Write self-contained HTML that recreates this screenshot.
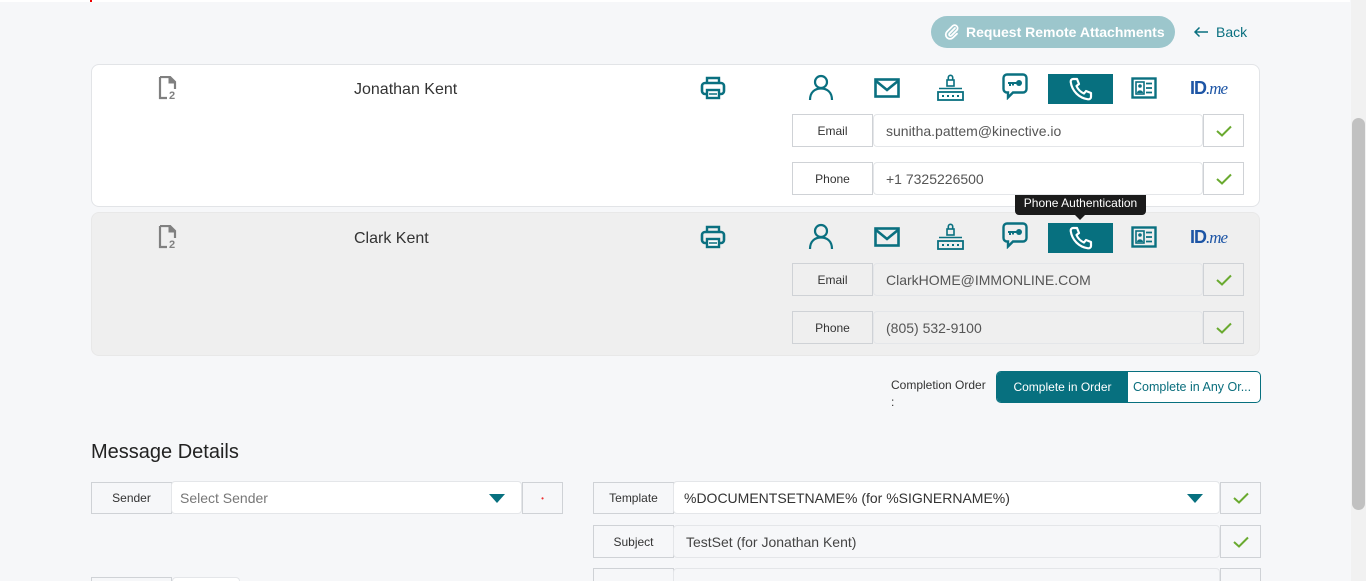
<!DOCTYPE html>
<html style="width:1366px;height:581px;overflow:hidden"><head><meta charset="utf-8"><style>
*{box-sizing:border-box;margin:0;padding:0}
body{width:1366px;height:581px;overflow:hidden;background:#f6f7f9;font-family:"Liberation Sans",sans-serif;position:relative;color:#333}
.a{position:absolute}
.card{position:absolute;left:91px;width:1169px;border:1px solid #e2e4e7;border-radius:8px}
.lbl{position:absolute;border:1px solid #cfd2d6;background:#f6f7f9;font-size:12px;color:#333;display:flex;align-items:center;justify-content:center}
.inp{position:absolute;border:1px solid #e4e6e9;border-radius:4px;font-size:14px;color:#555;display:flex;align-items:center;padding-left:12px}
.chk{position:absolute;border:1px solid #cfd2d6;display:flex;align-items:center;justify-content:center}
.name{position:absolute;font-size:16px;color:#333}
svg.ic{position:absolute}
</style></head><body>
<div class="a" style="left:0;top:0;width:1350px;height:2px;background:#fff"></div>
<div class="a" style="left:90px;top:0;width:2px;height:2px;background:#e00"></div>
<div class="a" style="left:1351px;top:0;width:15px;height:581px;background:#f1f1f1"></div>
<div class="a" style="left:1352px;top:118px;width:13px;height:392px;background:#c1c1c1;border-radius:7px"></div>

<div class="a" style="left:931px;top:16px;width:244px;height:32px;border-radius:16px;background:#9cc6cc;color:#fff;font-size:14px;font-weight:bold;display:flex;align-items:center;padding-left:35px">Request Remote Attachments</div>
<svg class="ic" style="left:944px;top:24px" width="16" height="16" viewBox="0 0 16 16"><path d="M11 4 L5.5 9.5 a1.4 1.4 0 0 0 2 2 L13 6 a3 3 0 0 0 -4.2 -4.2 L3 7.6 a4.2 4.2 0 0 0 6 6 L13 9.7" fill="none" stroke="#fff" stroke-width="1.8" stroke-linecap="round"/></svg>
<svg class="ic" style="left:1193px;top:26px" width="16" height="12" viewBox="0 0 16 12"><path d="M15 6 H2 M6.5 1.5 L2 6 L6.5 10.5" fill="none" stroke="#0a7080" stroke-width="1.5"/></svg>
<div class="a" style="left:1216px;top:24px;font-size:14px;color:#0a7080">Back</div>

<div class="card" style="top:64px;height:143px;background:#fff"></div>
<div class="card" style="top:212px;height:144px;background:#efefef;border-color:#e8e8e8"></div>

<div class="a" style="left:1015px;top:191px;width:131px;height:24px;background:#1b1b1b;border-radius:4px;color:#fff;font-size:12px;display:flex;align-items:center;justify-content:center">Phone Authentication</div>
<div class="a" style="left:1075px;top:215px;width:0;height:0;border-left:5px solid transparent;border-right:5px solid transparent;border-top:5px solid #1b1b1b"></div>

<div class="a" style="left:891px;top:377px;font-size:12px;color:#333;line-height:17px">Completion Order<br>:</div>
<div class="a" style="left:996px;top:371px;width:265px;height:32px;border:1px solid #07707f;border-radius:5px;background:#fff;overflow:hidden">
<div class="a" style="left:0;top:0;width:131px;height:30px;background:#07707f;color:#fff;font-size:12px;display:flex;align-items:center;justify-content:center">Complete in Order</div>
<div class="a" style="left:136px;top:8px;font-size:12.5px;color:#0a6e7d">Complete in Any Or...</div>
</div>

<div class="a" style="left:91px;top:441px;font-size:20px;color:#222">Message Details</div>

<div class="lbl" style="left:91px;top:482px;width:81px;height:32px">Sender</div>
<div class="inp" style="left:171px;top:481px;width:351px;height:33px;background:#fff;color:#777;padding-left:8px">Select Sender</div>
<div class="a" style="left:489px;top:494px;border-left:8px solid transparent;border-right:8px solid transparent;border-top:9px solid #07707f"></div>
<div class="lbl" style="left:522px;top:482px;width:41px;height:32px;background:#f6f7f9"><span style="color:#e33;font-size:8px">•</span></div>

<div class="lbl" style="left:593px;top:482px;width:81px;height:32px">Template</div>
<div class="inp" style="left:673px;top:481px;width:547px;height:33px;background:#fff;color:#333;padding-left:10px">%DOCUMENTSETNAME% (for %SIGNERNAME%)</div>
<div class="a" style="left:1187px;top:494px;border-left:8px solid transparent;border-right:8px solid transparent;border-top:9px solid #07707f"></div>
<div class="chk" style="left:1220px;top:482px;width:41px;height:32px"><svg width="16" height="12"><path d="M1 6 L6 10.5 L15 1.5" fill="none" stroke="#6aaa30" stroke-width="2"/></svg></div>

<div class="lbl" style="left:593px;top:525px;width:81px;height:33px">Subject</div>
<div class="inp" style="left:673px;top:525px;width:547px;height:33px;background:#f6f7f9;color:#444">TestSet (for Jonathan Kent)</div>
<div class="chk" style="left:1220px;top:525px;width:41px;height:33px"><svg width="16" height="12"><path d="M1 6 L6 10.5 L15 1.5" fill="none" stroke="#6aaa30" stroke-width="2"/></svg></div>

<div class="lbl" style="left:593px;top:568px;width:81px;height:13px;border-bottom:none"></div>
<div class="inp" style="left:673px;top:568px;width:547px;height:13px;background:#f6f7f9;border-bottom:none;border-radius:4px 4px 0 0"></div>
<div class="chk" style="left:1220px;top:568px;width:41px;height:13px;border-bottom:none"></div>
<div class="lbl" style="left:91px;top:577px;width:81px;height:4px;border-bottom:none"></div>
<div class="inp" style="left:172px;top:577px;width:68px;height:4px;background:#fff;border-bottom:none;border-radius:4px 4px 0 0"></div>

<div id="r1"></div>
<script>
function row(y,top2,bg,name,email,phone){
var chk='<svg width="16" height="12"><path d="M1 6 L6 10.5 L15 1.5" fill="none" stroke="#6aaa30" stroke-width="2"/></svg>';
var c='#0a7080';
var h='';
h+='<svg class="ic" style="left:158px;top:'+(y-12)+'px" width="22" height="24" viewBox="0 0 22 24"><path d="M2 1 H12 L17 6 V13 M2 1 V22 H9" fill="none" stroke="#808080" stroke-width="2.2"/><path d="M11 1 V7 H17" fill="#808080" stroke="#808080" stroke-width="1"/><text x="11" y="23" font-size="11" font-weight="bold" fill="#808080" font-family="Liberation Sans">2</text></svg>';
h+='<div class="name" style="left:354px;top:'+(y-7)+'px">'+name+'</div>';
h+='<svg class="ic" style="left:700px;top:'+(y-12)+'px" width="26" height="24" viewBox="0 0 26 24"><path d="M7 7 V2 H19 V7" fill="none" stroke="'+c+'" stroke-width="2.4"/><rect x="2" y="7" width="22" height="11" rx="3" fill="none" stroke="'+c+'" stroke-width="2.6"/><rect x="7" y="14" width="12" height="8" fill="#fff" stroke="'+c+'" stroke-width="2.4"/><line x1="9" y1="18" x2="17" y2="18" stroke="'+c+'" stroke-width="1.5"/></svg>';
h+='<svg class="ic" style="left:808px;top:'+(y-14)+'px" width="26" height="26" viewBox="0 0 26 26"><circle cx="13" cy="8" r="6" fill="none" stroke="'+c+'" stroke-width="2.2"/><path d="M2 26 C2 18 7 14.5 13 14.5 C19 14.5 24 18 24 26" fill="none" stroke="'+c+'" stroke-width="2.2"/></svg>';
h+='<svg class="ic" style="left:874px;top:'+(y-10)+'px" width="26" height="20" viewBox="0 0 26 20"><rect x="1.5" y="1.5" width="23" height="17" fill="none" stroke="'+c+'" stroke-width="2.6"/><path d="M2 3 L13 12 L24 3" fill="none" stroke="'+c+'" stroke-width="2.6"/></svg>';
h+='<svg class="ic" style="left:937px;top:'+(y-15)+'px" width="27" height="28" viewBox="0 0 27 28"><rect x="10" y="7" width="7" height="6" fill="none" stroke="'+c+'" stroke-width="1.6"/><path d="M11.3 7 V4.5 a2.2 2.2 0 0 1 4.4 0 V7" fill="none" stroke="'+c+'" stroke-width="1.6"/><line x1="2" y1="15.5" x2="25" y2="15.5" stroke="'+c+'" stroke-width="1.6"/><rect x="1" y="19" width="25" height="8" fill="none" stroke="'+c+'" stroke-width="1.8"/><g fill="'+c+'"><rect x="5" y="22" width="2" height="2"/><rect x="10" y="22" width="2" height="2"/><rect x="15" y="22" width="2" height="2"/><rect x="20" y="22" width="2" height="2"/></g></svg>';
h+='<svg class="ic" style="left:1002px;top:'+(y-15)+'px" width="26" height="27" viewBox="0 0 26 27"><path d="M5 1.5 H21 a3.5 3.5 0 0 1 3.5 3.5 V16 a3.5 3.5 0 0 1 -3.5 3.5 H11 L6 24.5 V19.5 H5 a3.5 3.5 0 0 1 -3.5 -3.5 V5 a3.5 3.5 0 0 1 3.5 -3.5Z" fill="none" stroke="'+c+'" stroke-width="2.4"/><circle cx="17" cy="10" r="3" fill="'+c+'"/><path d="M6 10 H15 M8 10 V13 M11 10 V12.5" stroke="'+c+'" stroke-width="2"/></svg>';
h+='<div class="a" style="left:1048px;top:'+(y-14)+'px;width:65px;height:30px;background:#07707f"></div>';
h+='<svg class="ic" style="left:1068px;top:'+(y-11)+'px" width="26" height="24" viewBox="0 0 26 24"><path d="M5 2 L9 2 L11 7 L8.5 9 C10 12.5 12.5 15 16 16.5 L18 14 L23 16 V20 C23 21.5 21.5 22.5 20 22.3 C11 21 4 14 2.7 5 C2.5 3.5 3.5 2 5 2Z" fill="none" stroke="#fff" stroke-width="2.2" stroke-linejoin="round"/></svg>';
h+='<svg class="ic" style="left:1131px;top:'+(y-11)+'px" width="26" height="22" viewBox="0 0 26 22"><rect x="1.5" y="1.5" width="23" height="19" fill="none" stroke="'+c+'" stroke-width="2.4"/><rect x="5" y="5" width="8" height="12" fill="none" stroke="'+c+'" stroke-width="1.6"/><circle cx="9" cy="9" r="1.8" fill="'+c+'"/><path d="M6 16 C6 12.5 12 12.5 12 16Z" fill="'+c+'"/><path d="M15 6.5 H21 M15 11 H21 M15 15.5 H21" stroke="'+c+'" stroke-width="1.8"/></svg>';
h+='<div class="a" style="left:1190px;top:'+(y-10)+'px;font-size:18px;font-weight:bold;color:#1d55a5;letter-spacing:-1px">ID<span style="font-family:\'Liberation Serif\',serif;font-style:italic;font-weight:normal;font-size:17px">.me</span></div>';
var rows=[['Email',email,top2],['Phone',phone,top2+48]];
rows.forEach(function(r){
h+='<div class="lbl" style="left:792px;top:'+r[2]+'px;width:81px;height:33px;background:'+bg+'">'+r[0]+'</div>';
h+='<div class="inp" style="left:873px;top:'+r[2]+'px;width:330px;height:33px;background:'+bg+'">'+r[1]+'</div>';
h+='<div class="chk" style="left:1203px;top:'+r[2]+'px;width:41px;height:33px;background:'+bg+'">'+chk+'</div>';
});
return h;
}
document.getElementById('r1').outerHTML=row(88,114,'#fff','Jonathan Kent','sunitha.pattem@kinective.io','+1 7325226500')+row(237,263,'#efefef','Clark Kent','ClarkHOME@IMMONLINE.COM','(805) 532-9100');
</script>
</body></html>
